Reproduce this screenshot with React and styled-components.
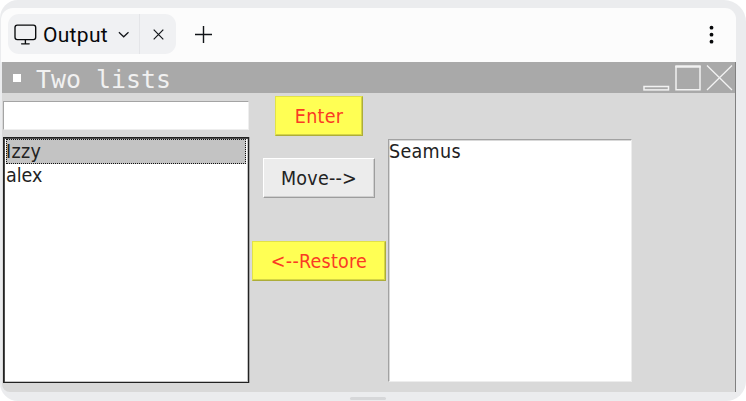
import React from "react";
import styled, { createGlobalStyle } from "styled-components";

const Global = createGlobalStyle`
  *, *::before, *::after { box-sizing: border-box; }
  html, body { margin: 0; background: #fff; overflow: hidden; }
  svg { display: block; flex: none; }
  button { font: inherit; }
`;

const Frame = styled.main`
  display: flex;
  flex-direction: column;
  width: 746px;
  height: 401px;
  padding: 8px 10px 0 2px;
  border-radius: 18px 22px 20px 18px;
  background: #ebecee;
`;

const TabBar = styled.header`
  display: flex;
  align-items: center;
  height: 54px;
  flex: none;
  margin-left: -1px;
  padding: 0 14px 1px 7px;
  background: #fcfcfc;
  border-radius: 12px 11px 0 0;
`;

const Tab = styled.div`
  display: flex;
  align-items: center;
  width: 168px;
  height: 40px;
  margin-top: -1px;
  border-radius: 11px;
  background: #f0f1f3;
`;

const TabMain = styled.div`
  display: flex;
  align-items: center;
  width: 132px;
  height: 40px;
  padding-left: 6px;
  border-right: 1px solid #e4e5e8;
`;

const TabTitle = styled.span`
  width: 66px;
  margin: 1px 8px 0 5px;
  font: 400 21px/24px Roboto, sans-serif;
  letter-spacing: 0.3px;
  color: #07080a;
  white-space: nowrap;
`;

const IconButton = styled.button`
  display: flex;
  align-items: center;
  justify-content: center;
  width: ${(p) => p.$width}px;
  height: 40px;
  margin-left: ${(p) => p.$gap || 0};
  padding: 0;
  border: 0;
  background: none;
`;

const Desktop = styled.section`
  width: 734px;
  height: 330px;
  flex: none;
  border-right: 1px solid #818181;
  border-radius: 0 0 0 8px;
  background: #d9d9d9;
  overflow: hidden;
`;

const TitleBar = styled.div`
  display: flex;
  align-items: center;
  height: 31px;
  padding: 0 2px 0 11px;
  background: #a9a9a9;
`;

const Bullet = styled.span`
  width: 8px;
  height: 8px;
  background: #fff;
`;

const WindowTitle = styled.span`
  margin: 4px auto 0 15px;
  font: 24.9px/28px "DejaVu Sans Mono", monospace;
  color: #f1f1f1;
  white-space: pre;
`;

const Content = styled.div`
  display: grid;
  grid-template-columns: 247px 138px 243px;
  padding-left: 1px;
  font: 19.5px/24px "DejaVu Sans Condensed", "DejaVu Sans", sans-serif;
  color: #222;
`;

const Column = styled.div`
  display: flex;
  flex-direction: column;
  align-items: ${(p) => p.$align || "stretch"};
  padding-top: ${(p) => p.$top}px;
`;

const Entry = styled.input`
  width: 246px;
  height: 29px;
  padding: 0 4px;
  border: 1px solid;
  border-color: #a4a4a4 #eeeeee #eeeeee #a4a4a4;
  border-radius: 0;
  outline: 0;
  background: #fff;
  font: inherit;
`;

const ListBox = styled.ul`
  width: ${(p) => p.$width}px;
  height: ${(p) => p.$height}px;
  margin: ${(p) => p.$gap || 0}px 0 0;
  padding: 0;
  list-style: none;
  background: #fff;
  ${(p) =>
    p.$focused
      ? "border: 1px solid #222; box-shadow: inset 1px 1px #4c4c4c, inset -1px -1px #c4c4c4, 1px 0 #a6a6a6;"
      : "border: 1px solid; border-color: #a2a2a2 #ededed #ededed #a2a2a2; box-shadow: inset 1px 1px #d8d8d8;"}
`;

const ListItem = styled.li`
  height: 24px;
  padding-left: ${(p) => p.$inset || 0}px;
  line-height: 23px;
  letter-spacing: ${(p) => p.$tracking || 0}px;
`;

const SelectedItem = styled(ListItem)`
  height: 25px;
  margin: 1px 2px 0 2px;
  padding: 0;
  text-indent: -1px;
  line-height: 23px;
  background: #c3c3c3;
  border: 1px dotted #111;
`;

const PushButton = styled.button`
  width: ${(p) => p.$width}px;
  height: 40px;
  margin: ${(p) => p.$margin || 0};
  padding: 0;
  flex: none;
  line-height: 37px;
  letter-spacing: 0.25px;
  border: 1px solid;
  ${(p) =>
    p.$yellow
      ? "color: #fa3b24; background: #ffff54; border-color: #e2e247 #adad39 #adad39 #e2e247; box-shadow: inset -1px -1px #d4d446;"
      : "color: #222; background: #ececec; border-color: #fff #9d9d9d #9d9d9d #fff; box-shadow: inset -1px -1px #cfcfcf;"}
`;

const Grip = styled.div`
  width: 36px;
  height: 3px;
  margin: 5px 0 0 348px;
  border-radius: 2px;
  background: #d6d7d9;
`;

const MonitorIcon = () => (
  <svg width="24" height="24" viewBox="0 0 24 24" fill="none" stroke="#090b0d" strokeWidth="1.35" strokeLinecap="round">
    <rect x="1" y="3.1" width="20.7" height="14.5" rx="2.3" />
    <path d="M11.4 17.7v4M7.6 21.8h7.6" />
  </svg>
);

const ChevronIcon = () => (
  <svg width="12" height="12" viewBox="0 0 12 12" fill="none" stroke="#111418" strokeWidth="1.2">
    <path d="M1.9 4.2l4.8 4.6 4.8-4.6" />
  </svg>
);

const CloseIcon = () => (
  <svg width="12" height="12" viewBox="0 0 12 12" stroke="#111418" strokeWidth="1.2">
    <path d="M1.7 1.7l9.6 9.6M11.3 1.7l-9.6 9.6" />
  </svg>
);

const PlusIcon = () => (
  <svg width="18" height="18" viewBox="0 0 18 18" stroke="#111418" strokeWidth="1.4">
    <path d="M8.5 0v17M0 8.5h17" />
  </svg>
);

const MoreIcon = () => (
  <svg width="6" height="20" viewBox="0 0 6 20" fill="#08090b">
    <circle cx="3.5" cy="2.7" r="1.9" />
    <circle cx="3.5" cy="9.7" r="1.9" />
    <circle cx="3.5" cy="16.7" r="1.9" />
  </svg>
);

const WindowControls = () => (
  <svg width="90" height="28" viewBox="0 0 90 28" fill="none" stroke="#f2f2f2" strokeWidth="1.5">
    <rect x="1" y="22.5" width="24.5" height="3.4" />
    <path d="M33 2.8h24v22.9h-24z" />
    <path d="M32.3 2.4h25.4" strokeWidth="2.4" />
    <path d="M64 1.5l25 24.5M89 1.5l-25 24.5" strokeWidth="1.3" />
  </svg>
);

export default function App() {
  return (
    <>
      <Global />
      <Frame>
        <TabBar>
          <Tab>
            <TabMain>
              <MonitorIcon />
              <TabTitle>Output</TabTitle>
              <ChevronIcon />
            </TabMain>
            <IconButton $width={36} aria-label="Close tab"><CloseIcon /></IconButton>
          </Tab>
          <IconButton $width={18} $gap="19px" aria-label="New tab"><PlusIcon /></IconButton>
          <IconButton $width={22} $gap="auto" aria-label="More options"><MoreIcon /></IconButton>
        </TabBar>
        <Desktop>
          <TitleBar>
            <Bullet />
            <WindowTitle>Two lists</WindowTitle>
            <WindowControls />
          </TitleBar>
          <Content>
            <Column $top={8}>
              <Entry aria-label="Name" />
              <ListBox $focused $width={246} $height={246} $gap={7}>
                <SelectedItem $tracking={0.3}>Izzy</SelectedItem>
                <ListItem $inset={2}>alex</ListItem>
              </ListBox>
            </Column>
            <Column $top={3} $align="center">
              <PushButton $yellow $width={88}>Enter</PushButton>
              <PushButton $width={112} $margin="22px 0 0">{"Move-->"}</PushButton>
              <PushButton $yellow $width={134} $margin="43px 0 0">{"<--Restore"}</PushButton>
            </Column>
            <Column $top={46}>
              <ListBox $width={244} $height={243}>
                <ListItem $tracking={0.3}>Seamus</ListItem>
              </ListBox>
            </Column>
          </Content>
        </Desktop>
        <Grip />
      </Frame>
    </>
  );
}
